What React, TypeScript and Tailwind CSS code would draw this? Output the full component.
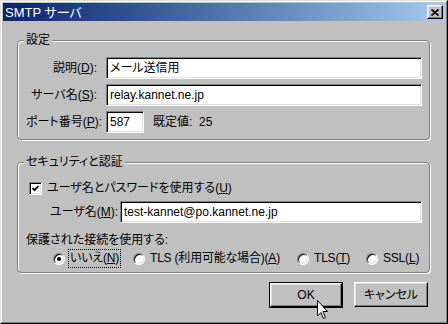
import type { ReactNode } from 'react'

const sunken =
  'border border-t-[#808080] border-l-[#808080] border-r-white border-b-white shadow-[inset_1px_1px_0_#000,inset_-1px_-1px_0_#dfdfdf]'
const raised =
  'border border-t-white border-l-white border-r-black border-b-black shadow-[inset_-1px_-1px_0_#808080,inset_1px_1px_0_#dfdfdf]'

function Key({ k }: { k: string }) {
  return (
    <>
      (<u>{k}</u>)
    </>
  )
}

function Field({ value, className = '' }: { value: string; className?: string }) {
  return (
    <div className={`h-[22px] bg-white ${sunken} flex items-center pl-[3px] ${className}`}>
      <span>{value}</span>
    </div>
  )
}

function Group({ title, children, className = '' }: { title: string; children: ReactNode; className?: string }) {
  return (
    <div
      className={`relative rounded-[4px] border border-[#808080] shadow-[inset_1px_1px_0_#fff,1px_1px_0_#fff] ${className}`}
    >
      <span className="absolute left-[6px] top-[-9px] px-[2px] bg-[#c0c0c0] leading-[16px]">{title}</span>
      {children}
    </div>
  )
}

function Radio({
  checked,
  children,
  focus,
  className = '',
}: {
  checked?: boolean
  children: ReactNode
  focus?: boolean
  className?: string
}) {
  return (
    <div className={`shrink-0 flex items-center gap-[4px] whitespace-nowrap tracking-[-0.2px] ${className}`}>
      <span className="w-[12px] h-[12px] rounded-full bg-white border border-[#808080] border-r-white border-b-white shadow-[inset_1px_1px_0_#000,inset_-1px_-1px_0_#dfdfdf] flex items-center justify-center">
        {checked && <span className="w-[4px] h-[4px] rounded-full bg-black" />}
      </span>
      <span className={`px-px leading-[17px] ${focus ? 'outline outline-1 outline-dotted outline-black' : ''}`}>
        {children}
      </span>
    </div>
  )
}

export default function App() {
  return (
    <div className="relative w-[448px] h-[324px] bg-[#c0c0c0] border border-t-[#dfdfdf] border-l-[#dfdfdf] border-r-black border-b-black text-[12px] text-black font-['Liberation_Sans','Noto_Sans_CJK_JP',sans-serif] [font-feature-settings:'palt'] overflow-hidden">
      <div className="h-full flex flex-col border border-t-white border-l-white border-r-[#808080] border-b-[#808080] p-px">
        {/* title bar */}
        <div className="h-[18px] flex items-center justify-between bg-linear-to-r from-[#0a246a] to-[#a6caf0] pl-[2px] pr-[2px]">
          <span className="text-white text-[13px] leading-none">SMTP サーバ</span>
          <button className={`w-[16px] h-[14px] bg-[#c0c0c0] ${raised} flex items-center justify-center`}>
            <svg width="8" height="7" viewBox="0 0 8 7">
              <path d="M0.5 0.5 L7.5 6.5 M7.5 0.5 L0.5 6.5" stroke="black" strokeWidth="1.8" />
            </svg>
          </button>
        </div>

        <div className="flex-1 flex flex-col pl-[14px] pr-[15px]">
          <Group title="設定" className="mt-[19px] pt-[16px] pb-[6px] pl-[8px] pr-[7px]">
            <div className="grid grid-cols-[71px_1fr] gap-x-[9px] gap-y-[5px] items-center">
              <span className="text-right">
                説明<Key k="D" />:
              </span>
              <Field value="メール送信用" />
              <span className="text-right">
                サーバ名<Key k="S" />:
              </span>
              <Field value="relay.kannet.ne.jp" />
              <span className="text-right whitespace-nowrap">
                ポート番号<Key k="P" />:
              </span>
              <div className="flex items-center">
                <Field value="587" className="w-[38px]" />
                <span className="ml-[9px]">既定値:&nbsp; 25</span>
              </div>
            </div>
          </Group>

          <Group title="セキュリティと認証" className="mt-[22px] pt-[17px] pb-[4px] pl-[8px] pr-[7px]">
            <div className="h-[16px] flex items-center pl-[3px] gap-[5px]">
              <span className={`w-[13px] h-[13px] bg-white ${sunken} flex items-center justify-center`}>
                <svg width="7" height="7" viewBox="0 0 7 7">
                  <path d="M0.5 3 L2.5 5.2 L6.5 1" stroke="black" strokeWidth="1.8" fill="none" />
                </svg>
              </span>
              <span>
                ユーザ名とパスワードを使用する<Key k="U" />
              </span>
            </div>
            <div className="mt-[5px] flex items-center pl-[24px]">
              <span className="w-[70px]">
                ユーザ名<Key k="M" />:
              </span>
              <Field value="test-kannet@po.kannet.ne.jp" className="flex-1" />
            </div>
            <div className="mt-[9px] h-[16px] leading-[16px]">保護された接続を使用する:</div>
            <div className="mt-px h-[19px] flex items-center pl-[27px]">
              <Radio checked focus className="w-[80px]">
                いいえ<Key k="N" />
              </Radio>
              <Radio className="w-[164px]">
                TLS (利用可能な場合)<Key k="A" />
              </Radio>
              <Radio className="w-[69px]">
                TLS<Key k="T" />
              </Radio>
              <Radio>
                SSL<Key k="L" />
              </Radio>
            </div>
          </Group>

          <div className="mt-[9px] flex justify-end gap-[11px] pr-[2px]">
            <button className="w-[74px] h-[26px] border border-black">
              <span className={`w-full h-full bg-[#c0c0c0] ${raised} flex items-center justify-center`}>OK</span>
            </button>
            <button className={`w-[74px] h-[25px] bg-[#c0c0c0] ${raised} flex items-center justify-center`}>
              キャンセル
            </button>
          </div>
        </div>
      </div>

      {/* mouse pointer */}
      <svg className="absolute left-[316px] top-[299px]" width="12" height="20" viewBox="0 0 12 20">
        <path d="M0.5 0.5 L0.5 16 L4 12.5 L6.5 18.5 L8.5 17.5 L6 11.5 L10.5 11.5 Z" fill="white" stroke="black" strokeWidth="1" />
      </svg>
    </div>
  )
}
